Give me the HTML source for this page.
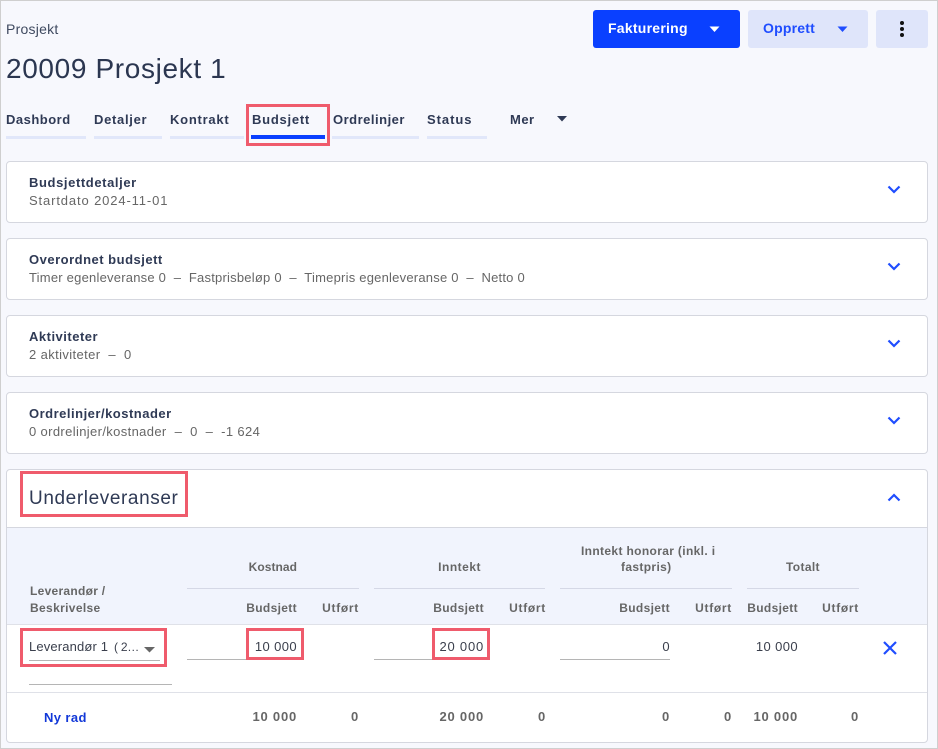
<!DOCTYPE html>
<html lang="no"><head><meta charset="utf-8"><title>Prosjekt</title>
<style>
html,body{margin:0;padding:0}
body{width:938px;height:749px;position:relative;overflow:hidden;background:#f7f8fd;font-family:"Liberation Sans",sans-serif;color:#2b3650}
#frame{position:absolute;left:0;top:0;width:936px;height:747px;border:1px solid #cfcfcf;pointer-events:none;z-index:9}
.a{position:absolute;white-space:nowrap;line-height:16px}
.r{text-align:right}
.card{position:absolute;left:6px;width:920px;background:#fff;border:1px solid #d5d7df;border-radius:4px}
.t{font-size:13px;font-weight:bold;left:29px;letter-spacing:.5px;color:#2f3a55}
.s{font-size:13px;left:29px;letter-spacing:.3px;color:#666}
.tab{font-size:13px;font-weight:bold;top:112px;letter-spacing:.5px;color:#2f3a55}
.ul{position:absolute;top:136px;height:3px;background:#e1e7fa}
.h{font-size:12px;font-weight:bold;color:#666;letter-spacing:.35px}
.uf{letter-spacing:.7px}
.v{font-size:13px;color:#3a3f4c;letter-spacing:.4px}
.f{font-size:13px;font-weight:bold;color:#666;letter-spacing:.8px}
.l{position:absolute;height:1px;background:#d5d8e6}
.u{position:absolute;height:1px;background:#b5b5b5}
.box{position:absolute;border:3px solid #ef5b6c;box-sizing:border-box}
svg{position:absolute;display:block}
</style></head><body>
<div id="frame"></div>
<div class="a" style="left:6px;top:21px;font-size:14px;letter-spacing:.25px;color:#3f4a60">Prosjekt</div>
<div class="a" style="left:6px;top:53px;font-size:28px;line-height:32px;letter-spacing:.64px;color:#2b3650">20009 Prosjekt 1</div>

<div style="position:absolute;left:593px;top:10px;width:147px;height:38px;background:#0a40ff;border-radius:3px"></div>
<div class="a" style="left:608px;top:20px;font-size:14px;font-weight:bold;color:#fff;letter-spacing:.25px">Fakturering</div>
<svg style="left:709px;top:26px" width="11" height="7"><path d="M0.5 0.5H10.5L5.5 6Z" fill="#fff"/></svg>
<div style="position:absolute;left:748px;top:10px;width:120px;height:38px;background:#dfe5fa;border-radius:3px"></div>
<div class="a" style="left:763px;top:20px;font-size:14px;font-weight:bold;color:#1f4dff;letter-spacing:.2px">Opprett</div>
<svg style="left:837px;top:26px" width="11" height="7"><path d="M0.5 0.5H10.5L5.5 6Z" fill="#1f4dff"/></svg>
<div style="position:absolute;left:876px;top:10px;width:52px;height:38px;background:#dfe5fa;border-radius:3px"></div>
<svg style="left:898px;top:20px" width="8" height="18"><circle cx="4" cy="3" r="2" fill="#111"/><circle cx="4" cy="9" r="2" fill="#111"/><circle cx="4" cy="15" r="2" fill="#111"/></svg>

<div class="a tab" style="left:6px">Dashbord</div><div class="ul" style="left:6px;width:80px"></div>
<div class="a tab" style="left:94px;letter-spacing:.7px">Detaljer</div><div class="ul" style="left:94px;width:68px"></div>
<div class="a tab" style="left:170px;letter-spacing:.75px">Kontrakt</div><div class="ul" style="left:170px;width:74px"></div>
<div class="a tab" style="left:252px;letter-spacing:.75px">Budsjett</div><div style="position:absolute;left:251px;top:135px;width:74px;height:4px;background:#0a40ff"></div>
<div class="a tab" style="left:333px">Ordrelinjer</div><div class="ul" style="left:332px;width:87px"></div>
<div class="a tab" style="left:427px;letter-spacing:.95px">Status</div><div class="ul" style="left:427px;width:60px"></div>
<div class="a tab" style="left:510px">Mer</div>
<svg style="left:557px;top:116px" width="10" height="6"><path d="M0 0H10L5 5.5Z" fill="#2f3a55"/></svg>
<div class="box" style="left:246px;top:104px;width:84px;height:42px"></div>

<div class="card" style="top:161px;height:60px"></div>
<div class="a t" style="top:175px;letter-spacing:.6px">Budsjettdetaljer</div>
<div class="a s" style="top:193px;letter-spacing:.87px">Startdato 2024-11-01</div>
<svg style="left:887px;top:185px" width="14" height="9" fill="none"><path d="M1.5 1.5L7 7L12.5 1.5" stroke="#1f4dff" stroke-width="2.2"/></svg>

<div class="card" style="top:238px;height:60px"></div>
<div class="a t" style="top:252px">Overordnet budsjett</div>
<div class="a s" style="top:270px;letter-spacing:.22px">Timer egenleveranse 0 &nbsp;–&nbsp; Fastprisbeløp 0 &nbsp;–&nbsp; Timepris egenleveranse 0 &nbsp;–&nbsp; Netto 0</div>
<svg style="left:887px;top:262px" width="14" height="9" fill="none"><path d="M1.5 1.5L7 7L12.5 1.5" stroke="#1f4dff" stroke-width="2.2"/></svg>

<div class="card" style="top:315px;height:60px"></div>
<div class="a t" style="top:329px">Aktiviteter</div>
<div class="a s" style="top:347px;letter-spacing:.38px">2 aktiviteter &nbsp;–&nbsp; 0</div>
<svg style="left:887px;top:339px" width="14" height="9" fill="none"><path d="M1.5 1.5L7 7L12.5 1.5" stroke="#1f4dff" stroke-width="2.2"/></svg>

<div class="card" style="top:392px;height:60px"></div>
<div class="a t" style="top:406px">Ordrelinjer/kostnader</div>
<div class="a s" style="top:424px;letter-spacing:.36px">0 ordrelinjer/kostnader &nbsp;–&nbsp; 0 &nbsp;–&nbsp; -1 624</div>
<svg style="left:887px;top:416px" width="14" height="9" fill="none"><path d="M1.5 1.5L7 7L12.5 1.5" stroke="#1f4dff" stroke-width="2.2"/></svg>

<div class="card" style="top:469px;height:272px;overflow:hidden">
  <div style="position:absolute;left:0;top:57px;width:920px;height:96px;background:#f1f4fd;border-top:1px solid #d5d7df;border-bottom:1px solid #dfe1e8"></div>
  <div style="position:absolute;left:0;top:222px;width:920px;height:1px;background:#dfe1e8"></div>
</div>
<div class="a" style="left:29px;top:488px;font-size:19px;line-height:22px;letter-spacing:.6px;color:#2f3a55">Underleveranser</div>
<div class="box" style="left:20px;top:471px;width:168px;height:46px"></div>
<svg style="left:887px;top:493px" width="14" height="9" fill="none"><path d="M1.5 7.5L7 2L12.5 7.5" stroke="#1f4dff" stroke-width="2.2"/></svg>

<div class="a h" style="left:30px;top:583px;letter-spacing:.28px">Leverandør /</div>
<div class="a h" style="left:30px;top:600px">Beskrivelse</div>

<div class="a h r" style="right:641px;top:559px;letter-spacing:.05px">Kostnad</div>
<div class="a h r" style="right:457px;top:559px;letter-spacing:.5px">Inntekt</div>
<div class="a h" style="left:581px;top:543px">Inntekt honorar (inkl. i</div>
<div class="a h" style="left:621px;top:559px">fastpris)</div>
<div class="a h" style="left:786px;top:559px">Totalt</div>

<div class="l" style="left:187px;top:588px;width:172px"></div>
<div class="l" style="left:374px;top:588px;width:171px"></div>
<div class="l" style="left:560px;top:588px;width:172px"></div>
<div class="l" style="left:747px;top:588px;width:112px"></div>

<div class="a h r" style="right:641px;top:600px">Budsjett</div>
<div class="a h r uf" style="right:579px;top:600px">Utført</div>
<div class="a h r" style="right:454px;top:600px">Budsjett</div>
<div class="a h r uf" style="right:392px;top:600px">Utført</div>
<div class="a h r" style="right:268px;top:600px">Budsjett</div>
<div class="a h r uf" style="right:206px;top:600px">Utført</div>
<div class="a h r" style="right:140px;top:600px">Budsjett</div>
<div class="a h r uf" style="right:79px;top:600px">Utført</div>

<div class="a v" style="left:29px;top:639px;letter-spacing:.15px">Leverandør 1</div>
<div class="a v" style="left:114px;top:639px;font-size:12px;letter-spacing:-.25px">( 2…</div>
<svg style="left:144px;top:647px" width="11" height="6"><path d="M0 0H11L5.5 5.5Z" fill="#666"/></svg>
<div class="u" style="left:29px;top:660px;width:131px"></div>
<div class="u" style="left:29px;top:684px;width:143px"></div>
<div class="box" style="left:20px;top:628px;width:147px;height:39px"></div>

<div class="u" style="left:187px;top:659px;width:60px"></div>
<div class="a v r" style="right:641px;top:639px">10 000</div>
<div class="box" style="left:246px;top:628px;width:58px;height:32px"></div>
<div class="u" style="left:374px;top:659px;width:60px"></div>
<div class="a v r" style="right:454px;top:639px;letter-spacing:.8px">20 000</div>
<div class="box" style="left:432px;top:628px;width:58px;height:32px"></div>
<div class="u" style="left:560px;top:659px;width:110px"></div>
<div class="a v r" style="right:268px;top:639px">0</div>
<div class="a v r" style="right:140px;top:639px">10 000</div>
<svg style="left:883px;top:641px" width="14" height="14" fill="none"><path d="M1 1L13 13M13 1L1 13" stroke="#1f4dff" stroke-width="2.2"/></svg>

<div class="a" style="left:44px;top:710px;font-size:13px;font-weight:bold;color:#1238d8;letter-spacing:.4px">Ny rad</div>
<div class="a f r" style="right:641px;top:709px">10 000</div>
<div class="a f r" style="right:579px;top:709px">0</div>
<div class="a f r" style="right:454px;top:709px">20 000</div>
<div class="a f r" style="right:392px;top:709px">0</div>
<div class="a f r" style="right:268px;top:709px">0</div>
<div class="a f r" style="right:206px;top:709px">0</div>
<div class="a f r" style="right:140px;top:709px">10 000</div>
<div class="a f r" style="right:79px;top:709px">0</div>
</body></html>
